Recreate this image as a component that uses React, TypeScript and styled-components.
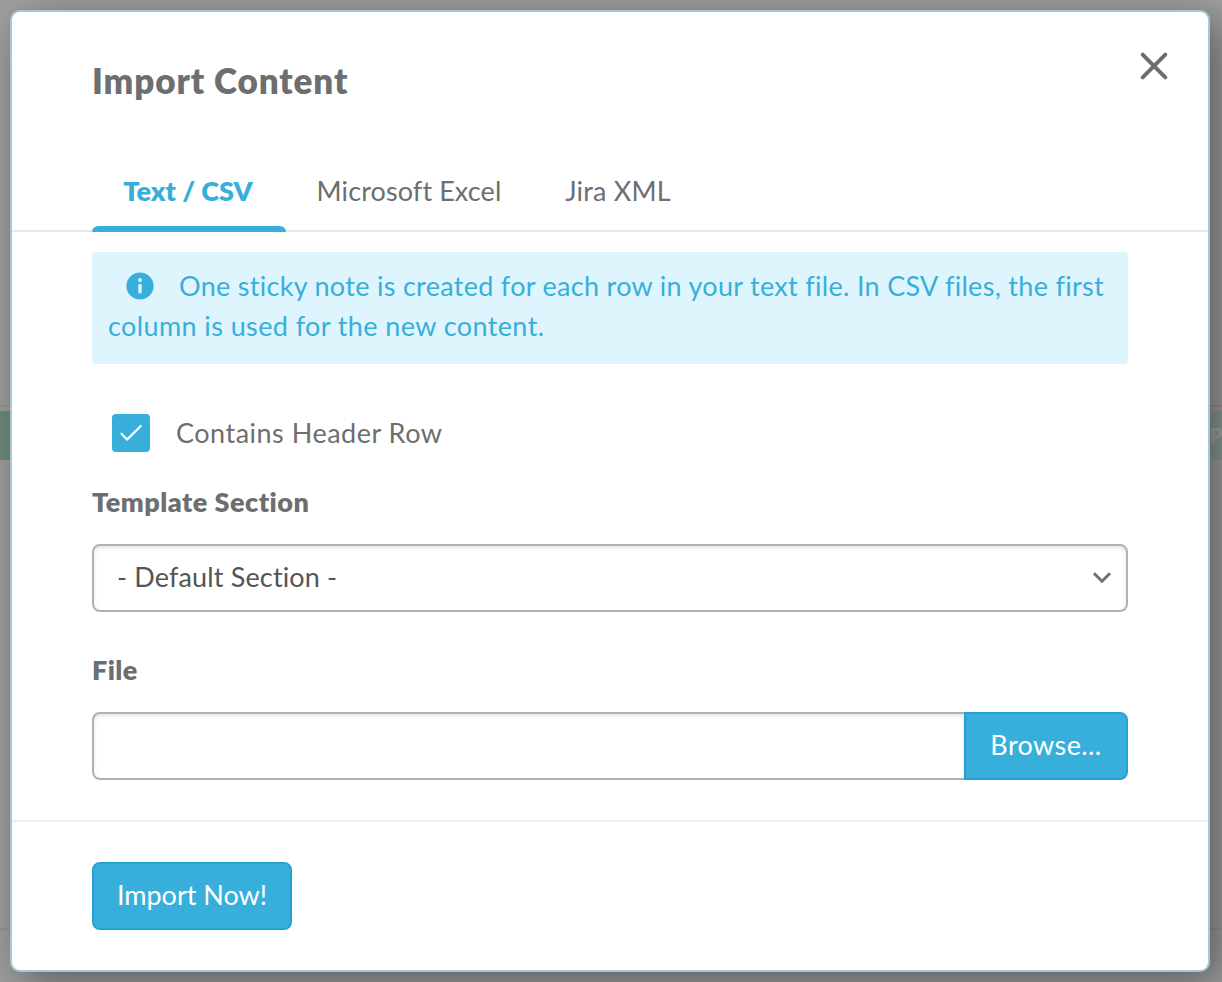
import React from "react";
import styled, { createGlobalStyle } from "styled-components";

const GlobalStyle = createGlobalStyle`
  *, *::before, *::after { box-sizing: border-box; }
  body {
    margin: 0;
    font-family: Lato, "Open Sans", sans-serif;
    font-size: 27px;
    font-variant-ligatures: none;
    line-height: 40px;
    color: #6d6e70;
  }
  button { font: inherit; margin: 0; }
`;

const Screen = styled.div`
  display: grid;
  width: 1222px;
  height: 982px;
  overflow: hidden;
  background: #9f9f9f;
`;

const Board = styled.div`
  grid-area: 1 / 1;
  display: flex;
  flex-direction: column;
`;

const BoardLine = styled.div<{ $top: number; $color: string }>`
  height: 2px;
  flex: none;
  margin-top: ${(p) => p.$top}px;
  background: ${(p) => p.$color};
`;

const BoardBand = styled.div`
  height: 49px;
  flex: none;
  margin-top: 4px;
  padding-left: 1210px;
  background: linear-gradient(90deg, #6b8a78 0, #728f80 20px, #8c9b94 1200px);
  color: #a6a9a8;
  font-size: 20px;
  font-weight: 800;
  line-height: 49px;
  white-space: nowrap;
`;

const Modal = styled.section`
  grid-area: 1 / 1;
  position: relative;
  display: flex;
  flex-direction: column;
  width: 1200px;
  height: 962px;
  margin: 10px;
  background: #fff;
  border: 2px solid #a5c8d6;
  border-radius: 10px;
  box-shadow: 10px 10px 40px rgba(0, 0, 0, 0.43);
`;

const Header = styled.header`
  display: flex;
  justify-content: space-between;
  height: 140px;
  padding: 40px 38px 0 80px;
`;

const Title = styled.h1`
  margin: 6px 0 0;
  font-size: 35px;
  font-weight: 800;
  line-height: 44px;
  letter-spacing: 0.9px;
`;

const CloseButton = styled.button`
  width: 32px;
  height: 32px;
  margin-top: -2px;
  padding: 0;
  border: 0;
  background: none;
  color: #6d6e70;
  svg { display: block; }
`;

const Tabs = styled.nav`
  display: flex;
  height: 80px;
  padding-left: 80px;
  border-bottom: 2px solid #e8e8e8;
`;

const Tab = styled.button<{ $active?: boolean; $width: number; $spacing: number }>`
  position: relative;
  width: ${(p) => p.$width}px;
  height: 80px;
  padding: 0 ${(p) => (p.$active ? 2 : 0)}px 2px 0;
  border: 0;
  background: none;
  color: ${(p) => (p.$active ? "#37afda" : "#6d6e70")};
  font-weight: ${(p) => (p.$active ? 800 : 400)};
  letter-spacing: ${(p) => p.$spacing}px;
  white-space: nowrap;
  &::after {
    content: "";
    position: absolute;
    left: 0;
    bottom: 0;
    width: 100%;
    height: 6px;
    border-radius: 6px 6px 0 0;
    background: ${(p) => (p.$active ? "#37afda" : "transparent")};
  }
`;

const Body = styled.div`
  display: flex;
  flex-direction: column;
  height: 590px;
  padding: 20px 80px 0;
  border-bottom: 2px solid #ededed;
`;

const Notice = styled.p`
  height: 112px;
  flex: none;
  margin: 0;
  padding: 14px 16px;
  border-radius: 4px;
  background: #dff5fe;
  color: #37afda;
  svg {
    display: inline-block;
    margin: 0 25px 0 18px;
    vertical-align: -4px;
  }
`;

const NoticeLine = styled.span<{ $spacing: number }>`
  letter-spacing: ${(p) => p.$spacing}px;
  white-space: nowrap;
`;

const CheckRow = styled.label`
  display: flex;
  align-items: center;
  gap: 26px;
  height: 38px;
  margin: 50px 0 0 20px;
  letter-spacing: 0.5px;
`;

const CheckBox = styled.span`
  width: 38px;
  height: 38px;
  border-radius: 4px;
  background: #37afda;
  svg { display: block; }
`;

const FieldLabel = styled.div<{ $top: number; $spacing: number }>`
  height: 40px;
  margin-top: ${(p) => p.$top}px;
  font-weight: 800;
  letter-spacing: ${(p) => p.$spacing}px;
`;

const Select = styled.div`
  display: flex;
  align-items: center;
  justify-content: space-between;
  height: 68px;
  margin-top: 22px;
  padding: 0 14px 2px 23px;
  border: 2px solid #b1b1b1;
  border-radius: 8px;
  box-shadow: inset 0 2px 4px rgba(0, 0, 0, 0.1);
  color: #555;
  letter-spacing: 0.15px;
`;

const FileRow = styled.div`
  display: flex;
  height: 68px;
  margin-top: 22px;
`;

const FileInput = styled.div`
  flex: 1;
  border: 2px solid #b1b1b1;
  border-right: 0;
  border-radius: 8px 0 0 8px;
  box-shadow: inset 0 2px 4px rgba(0, 0, 0, 0.1);
`;

const Button = styled.button<{ $width: number; $attached?: boolean; $spacing: number }>`
  width: ${(p) => p.$width}px;
  height: 68px;
  padding: 0 0 3px;
  border: 2px solid #23a3d3;
  border-radius: ${(p) => (p.$attached ? "0 8px 8px 0" : "8px")};
  background: #37afda;
  color: #fff;
  letter-spacing: ${(p) => p.$spacing}px;
`;

const Footer = styled.footer`
  padding: 40px 80px;
`;

const CloseIcon = () => (
  <svg width="32" height="32" viewBox="0 0 32 32" fill="none" stroke="currentColor" strokeWidth="4" strokeLinecap="round">
    <path d="M4.7 4.7 27.3 27.3M27.3 4.7 4.7 27.3" />
  </svg>
);

const InfoIcon = () => (
  <svg width="28" height="28" viewBox="0 0 28 28">
    <circle cx="14" cy="14" r="13.6" fill="#37afda" />
    <circle cx="14" cy="8" r="1.9" fill="#dff5fe" />
    <rect x="12.3" y="11.8" width="3.4" height="9.8" rx="1.5" fill="#dff5fe" />
  </svg>
);

const CheckIcon = () => (
  <svg width="38" height="38" viewBox="0 0 38 38" fill="none" stroke="#fff" strokeWidth="2.2" strokeLinecap="round" strokeLinejoin="round">
    <path d="M9.5 19.8 15 25.6 28.8 12" />
  </svg>
);

const ChevronIcon = () => (
  <svg width="20" height="14" viewBox="0 0 20 14" fill="none" stroke="#6d6e70" strokeWidth="3">
    <path d="M2 3.2 10 11.2 18 3.2" />
  </svg>
);

export default function App() {
  return (
    <>
      <GlobalStyle />
      <Screen>
        <Board>
          <BoardLine $top={405} $color="#a09089" />
          <BoardBand>P</BoardBand>
          <BoardLine $top={468} $color="#8c9c91" />
        </Board>
        <Modal>
          <Header>
            <Title>Import Content</Title>
            <CloseButton aria-label="Close"><CloseIcon /></CloseButton>
          </Header>
          <Tabs>
            <Tab $active $width={194} $spacing={0}>Text / CSV</Tab>
            <Tab $width={246} $spacing={0.1}>Microsoft Excel</Tab>
            <Tab $width={172} $spacing={0.2}>Jira XML</Tab>
          </Tabs>
          <Body>
            <Notice>
              <InfoIcon />
              <NoticeLine $spacing={0.3}>One sticky note is created for each row in your text file. In CSV files, the first</NoticeLine>
              <br />
              <NoticeLine $spacing={0.4}>column is used for the new content.</NoticeLine>
            </Notice>
            <CheckRow>
              <CheckBox><CheckIcon /></CheckBox>
              Contains Header Row
            </CheckRow>
            <FieldLabel $top={30} $spacing={0.5}>Template Section</FieldLabel>
            <Select>
              - Default Section -
              <ChevronIcon />
            </Select>
            <FieldLabel $top={38} $spacing={0.4}>File</FieldLabel>
            <FileRow>
              <FileInput />
              <Button $width={164} $attached $spacing={0.4}>Browse...</Button>
            </FileRow>
          </Body>
          <Footer>
            <Button $width={200} $spacing={0}>Import Now!</Button>
          </Footer>
        </Modal>
      </Screen>
    </>
  );
}
